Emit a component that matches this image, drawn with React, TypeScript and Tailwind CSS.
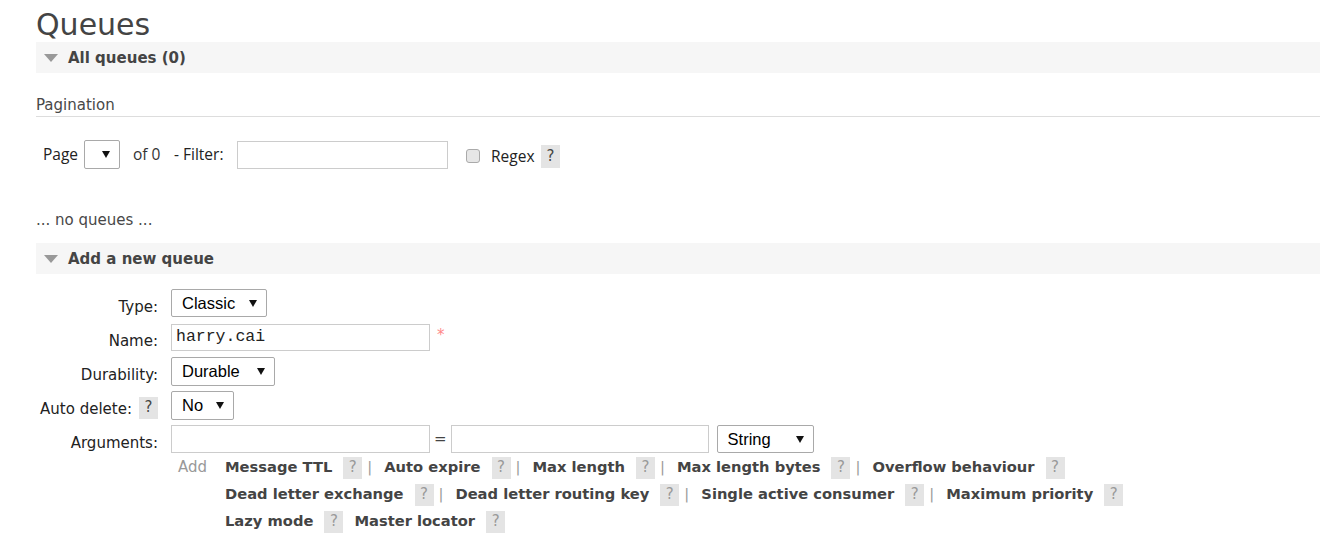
import React from "react";

const Help = ({ dark, h = "h-[22px]" }: { dark?: boolean; h?: string }) => (
  <span
    className={`inline-flex ${h} w-[19px] items-center justify-center bg-[#e4e4e4] font-normal ${
      dark ? "text-[#444]" : "text-[#999]"
    }`}
  >
    ?
  </span>
);

const Arrow = () => (
  <svg width="8" height="7" viewBox="0 0 8 7" className="shrink-0">
    <polygon points="0,0 8,0 4,7" fill="#111" />
  </svg>
);

const Select = ({ value, w, h = "h-[28px]" }: { value: string; w: string; h?: string }) => (
  <div
    className={`flex ${w} ${h} items-center justify-between rounded-[2px] border border-[#a9a9a9] bg-white pl-[10px] pr-[9px] font-['Liberation_Sans',Arial,sans-serif] text-[16.5px] text-black`}
  >
    <span>{value}</span>
    <Arrow />
  </div>
);

const Triangle = () => (
  <svg width="14" height="8" viewBox="0 0 14 8" className="shrink-0">
    <polygon points="0,0 14,0 7,8" fill="#999" />
  </svg>
);

const SectionBar = ({ title }: { title: string }) => (
  <div className="flex h-[31px] items-center gap-[10px] bg-[#f6f6f6] pl-[8px]">
    <Triangle />
    <span className="pt-[1px] font-bold text-[#444]">{title}</span>
  </div>
);

const FormRow = ({ label, help, children }: { label: string; help?: boolean; children: React.ReactNode }) => (
  <div className="flex h-[34px] items-center">
    <div className="flex w-[122px] shrink-0 items-center justify-end gap-[7px] pt-[8px] text-[#222]">
      <span>{label}</span>
      {help && (
        <span className="-mt-[3px]">
          <Help dark />
        </span>
      )}
    </div>
    <div className="ml-[13px] flex items-center">{children}</div>
  </div>
);

const argRows: { items: string[]; sep: boolean }[] = [
  { items: ["Message TTL", "Auto expire", "Max length", "Max length bytes", "Overflow behaviour"], sep: true },
  { items: ["Dead letter exchange", "Dead letter routing key", "Single active consumer", "Maximum priority"], sep: true },
  { items: ["Lazy mode", "Master locator"], sep: false },
];

export default function App() {
  return (
    <div className="min-h-screen bg-white pl-[36px] font-['DejaVu_Sans',Verdana,sans-serif] text-[15px] text-[#484848]">
      <h1 className="pt-[8px] text-[30px] leading-[34px] text-[#444]">Queues</h1>

      <SectionBar title="All queues (0)" />

      <div className="mt-[22px] border-b border-[#ddd] pb-[1px] leading-[20px]">Pagination</div>

      <div className="mt-[23px] flex h-[29px] items-center pl-[7px] font-['Open_Sans',sans-serif] text-[15.5px] text-[#222]">
        <span className="w-[41px] shrink-0">Page</span>
        <Select value="" w="w-[36px]" h="h-[29px]" />
        <span className="ml-[13px] w-[41px] shrink-0 text-[#333]">of 0</span>
        <span className="w-[63px] shrink-0">- Filter:</span>
        <div className="h-[28px] w-[211px] shrink-0 border border-[#ccc]" />
        <div className="ml-[18px] mt-[2px] h-[14px] w-[14px] shrink-0 rounded-[3px] border border-[#aaa] bg-[#e6e6e6]" />
        <span className="ml-[11px] mt-[5px] w-[50px] shrink-0">Regex</span>
        <span className="mt-[3px] font-['DejaVu_Sans',sans-serif] text-[15px]">
          <Help dark h="h-[23px]" />
        </span>
      </div>

      <div className="mt-[41px] leading-[20px]">... no queues ...</div>

      <div className="mt-[13px]">
        <SectionBar title="Add a new queue" />
      </div>

      <div className="mt-[12px]">
        <FormRow label="Type:">
          <Select value="Classic" w="w-[96px]" />
        </FormRow>
        <FormRow label="Name:">
          <div className="flex h-[27px] w-[259px] items-center border border-[#ccc] pl-[4px] font-['Liberation_Mono','Courier_New',monospace] text-[16.5px] text-[#222]">
            harry.cai
          </div>
          <span className="ml-[7px] -mt-[4px] text-[#f88]">*</span>
        </FormRow>
        <FormRow label="Durability:">
          <Select value="Durable" w="w-[104px]" h="h-[29px]" />
        </FormRow>
        <FormRow label="Auto delete:" help>
          <Select value="No" w="w-[63px]" h="h-[29px]" />
        </FormRow>
        <FormRow label="Arguments:">
          <div className="h-[28px] w-[259px] border border-[#ccc]" />
          <span className="mx-[4px] text-[#444]">=</span>
          <div className="h-[28px] w-[258px] border border-[#ccc]" />
          <div className="ml-[8px]">
            <Select value="String" w="w-[97px]" />
          </div>
        </FormRow>

        <div className="-mt-[2px] flex pl-[142px]">
          <span className="w-[47px] shrink-0 pt-[2px] leading-[22px] text-[#999]">Add</span>
          <div className="flex flex-col">
            {argRows.map((row, ri) => (
              <div key={ri} className="flex h-[27px] items-center text-[14.7px] font-bold text-[#444]">
                {row.items.map((item, i) => (
                  <React.Fragment key={item}>
                    {i > 0 &&
                      (row.sep ? (
                        <span className="ml-[5px] mr-[12px] font-normal text-[#999]">|</span>
                      ) : (
                        <span className="ml-[11px]" />
                      ))}
                    <span>{item}</span>
                    <span className="ml-[11px] text-[15px]">
                      <Help />
                    </span>
                  </React.Fragment>
                ))}
              </div>
            ))}
          </div>
        </div>
      </div>
    </div>
  );
}
